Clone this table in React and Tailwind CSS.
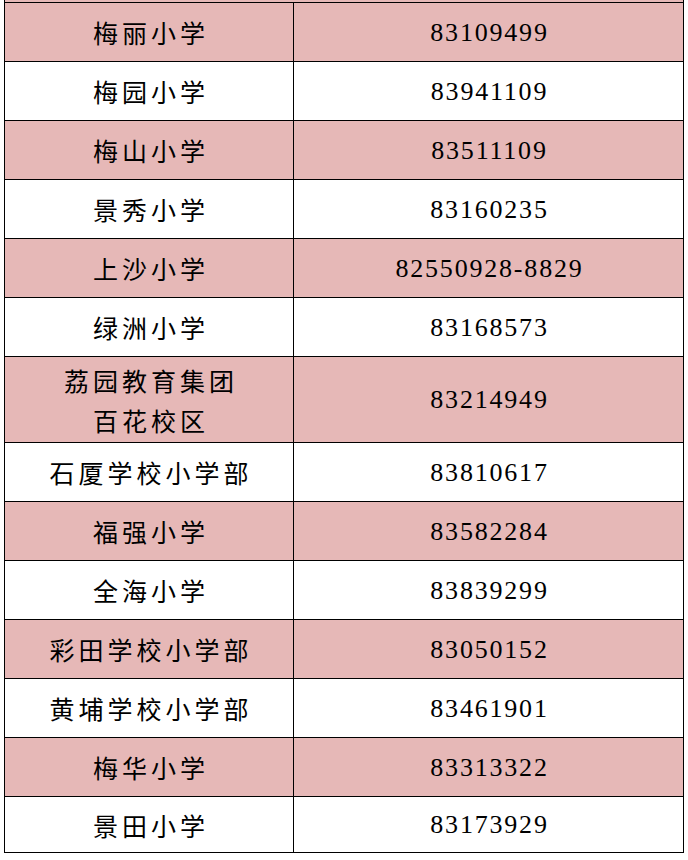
import React from 'react';

const schools = [
  { name: ['梅丽小学'], phone: '83109499', h: 'h-[59px]' },
  { name: ['梅园小学'], phone: '83941109', h: 'h-[59px]' },
  { name: ['梅山小学'], phone: '83511109', h: 'h-[59px]' },
  { name: ['景秀小学'], phone: '83160235', h: 'h-[59px]' },
  { name: ['上沙小学'], phone: '82550928-8829', h: 'h-[59px]' },
  { name: ['绿洲小学'], phone: '83168573', h: 'h-[59px]' },
  { name: ['荔园教育集团', '百花校区'], phone: '83214949', h: 'h-[86px]' },
  { name: ['石厦学校小学部'], phone: '83810617', h: 'h-[59px]' },
  { name: ['福强小学'], phone: '83582284', h: 'h-[59px]' },
  { name: ['全海小学'], phone: '83839299', h: 'h-[59px]' },
  { name: ['彩田学校小学部'], phone: '83050152', h: 'h-[59px]' },
  { name: ['黄埔学校小学部'], phone: '83461901', h: 'h-[59px]' },
  { name: ['梅华小学'], phone: '83313322', h: 'h-[59px]' },
  { name: ['景田小学'], phone: '83173929', h: 'h-[56px]' },
];

const App = () => {
  return (
    <div className="w-[688px] h-[860px] bg-white text-black font-sans">
      {/* strip of the row cut off above */}
      <div className="ml-[4px] w-[680px] h-[2px] bg-[#e6b8b7] border-l border-r border-black" />
      <div className="ml-[4px] w-[680px] border-t border-l border-r border-black">
        {schools.map((s, i) => (
          <div
            key={i}
            className={`flex border-b border-black ${s.h} ${i % 2 === 0 ? 'bg-[#e6b8b7]' : 'bg-white'}`}
          >
            <div className="w-[289px] shrink-0 border-r border-black flex flex-col items-center justify-center text-[25px] leading-[40px] tracking-[4px] font-['Noto_Sans_CJK_SC']">
              {s.name.map((line) => (
                <span key={line} className="pl-[4px]">{line}</span>
              ))}
            </div>
            <div className="flex-1 flex items-center justify-center pl-[2px] text-[26px] tracking-[1.8px]">
              <span className="font-['Liberation_Serif']">{s.phone}</span>
            </div>
          </div>
        ))}
      </div>
    </div>
  );
};

export default App;
